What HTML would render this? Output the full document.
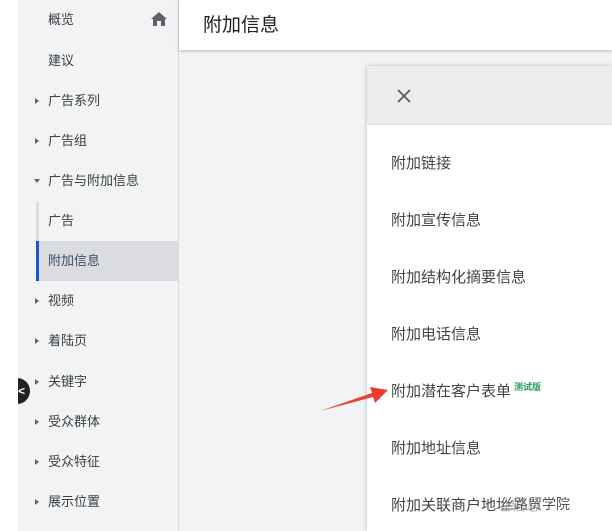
<!DOCTYPE html><html><head><meta charset="utf-8"><style>
html{overflow:hidden;width:612px;height:531px}
body{margin:0;width:612px;height:531px;overflow:hidden;background:#fff;font-family:"Liberation Sans","Noto Sans CJK SC",sans-serif;position:relative}
.sb{position:absolute;left:18px;top:0;width:160px;height:531px;background:#f1f3f4;border-right:1px solid #dadce0;overflow:hidden}
.it{position:absolute;left:0;width:160px;height:40px;line-height:40px;font-size:13px;color:#3c4043}
.it span{position:absolute;left:30px;top:0}
.tri{position:absolute;left:17px;top:17px;width:0;height:0;border-top:3px solid transparent;border-bottom:3px solid transparent;border-left:4px solid #5f6368}
.tri.d{left:16px;top:18px;border-left:3px solid transparent;border-right:3px solid transparent;border-top:4px solid #5f6368;border-bottom:0}
.main{position:absolute;left:179px;top:0;width:433px;height:531px;background:#f1f3f4}
.hd{position:absolute;left:0;top:0;width:433px;height:50px;background:#fff;box-shadow:0 1px 3px rgba(0,0,0,.25);font-size:19px;line-height:52px;color:#202124}
.hd span{position:absolute;left:24px}
.pn{position:absolute;left:367px;top:66px;width:245px;height:465px;background:#fff;box-shadow:0 0 4px rgba(0,0,0,.25);overflow:hidden}
.ph{height:58px;background:#ededed;border-bottom:1px solid #dcdcdc;position:relative}
.pi{position:absolute;left:24px;font-size:15px;color:#444;white-space:nowrap}
</style></head><body>
<div class="sb">
<div class="it" style="top:0"><span>概览</span><svg style="position:absolute;left:133px;top:12px" width="16" height="14" viewBox="0 0 16 14"><path d="M8 0L0 7h2v7h4V9h4v5h4V7h2z" fill="#5f6368"/></svg></div>
<div class="it" style="top:41px"><span>建议</span></div>
<div class="it" style="top:81px"><i class="tri"></i><span>广告系列</span></div>
<div class="it" style="top:121px"><i class="tri"></i><span>广告组</span></div>
<div class="it" style="top:161px"><i class="tri d"></i><span>广告与附加信息</span></div>
<div class="it" style="top:201px"><span>广告</span></div>
<div style="position:absolute;left:18px;top:202px;width:3px;height:40px;background:#dadce0"></div>
<div class="it" style="top:241px;background:#dadce0;left:18px;width:142px"><span style="left:12px;color:#3c4a6e">附加信息</span></div>
<div style="position:absolute;left:18px;top:241px;width:3px;height:40px;background:#1a56c4"></div>
<div class="it" style="top:281px"><i class="tri"></i><span>视频</span></div>
<div class="it" style="top:321px"><i class="tri"></i><span>着陆页</span></div>
<div class="it" style="top:362px"><i class="tri"></i><span>关键字</span></div>
<div class="it" style="top:402px"><i class="tri"></i><span>受众群体</span></div>
<div class="it" style="top:442px"><i class="tri"></i><span>受众特征</span></div>
<div class="it" style="top:482px"><i class="tri"></i><span>展示位置</span></div>
<div style="position:absolute;left:-14px;top:378px;width:26px;height:26px;border-radius:50%;background:#222"></div>
<div style="position:absolute;left:0;top:384px;color:#fff;font-size:12px;font-weight:bold">&lt;</div>
</div>
<div class="main"><div class="hd"><span>附加信息</span></div></div>
<div class="pn"><div class="ph"><svg style="position:absolute;left:30px;top:23px" width="14" height="14"><path d="M1 1L13 13M13 1L1 13" stroke="#555" stroke-width="1.6"/></svg></div>
<div class="pi" style="top:86px">附加链接</div>
<div class="pi" style="top:143px">附加宣传信息</div>
<div class="pi" style="top:200px">附加结构化摘要信息</div>
<div class="pi" style="top:257px">附加电话信息</div>
<div class="pi" style="top:314px">附加潜在客户表单<sup style="font-size:9px;color:#1e9e5a;font-weight:bold;margin-left:3px">测试版</sup></div>
<div class="pi" style="top:371px">附加地址信息</div>
<div class="pi" style="top:428px">附加关联商户地址信息</div>
</div>
<svg style="position:absolute;left:0;top:0" width="612" height="531"><path d="M320 411L372 393L370 387L388 390L375 403L373 397Z" fill="#ee3b2f"/></svg>
<div style="position:absolute;left:500px;top:494px;font-size:14px;color:#555;background:rgba(255,255,255,.6)">丝路贸学院</div>
</body></html>
